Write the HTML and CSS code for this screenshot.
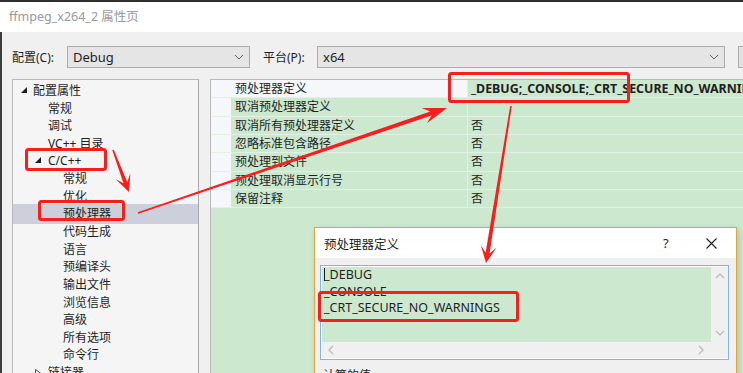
FILE: index.html
```html
<!DOCTYPE html>
<html lang="zh-CN">
<head>
    <meta charset="UTF-8">
    <title>ffmpeg_x264_2 属性页</title>
    <link rel="stylesheet" href="styles.css">
</head>
<body>
    <div class="screen">
        <div class="topline"></div>
        <div class="titlebar">ffmpeg_x264_2 属性页</div>

        <div class="window-body">
            <!-- Configuration / platform selectors -->
            <div class="config-row">
                <span class="label label-config">配置(C):</span>
                <div class="combo combo-config">
                    <span>Debug</span>
                    <svg class="chev" width="10" height="6" viewBox="0 0 10 6"><polyline points="1,1 5,5 9,1" fill="none" stroke="#606060" stroke-width="1"/></svg>
                </div>
                <span class="label label-platform">平台(P):</span>
                <div class="combo combo-platform">
                    <span>x64</span>
                    <svg class="chev" width="10" height="6" viewBox="0 0 10 6"><polyline points="1,1 5,5 9,1" fill="none" stroke="#606060" stroke-width="1"/></svg>
                </div>
                <div class="combo-btn"></div>
            </div>

            <div class="main">
                <!-- Property tree -->
                <div class="tree">
                    <div class="node lvl0"><svg class="tri" width="7" height="7" viewBox="0 0 7 7"><polygon points="6,0 6,6 0,6" fill="#1e1e1e"/></svg>配置属性</div>
                    <div class="node lvl1">常规</div>
                    <div class="node lvl1">调试</div>
                    <div class="node lvl1">VC++ 目录</div>
                    <div class="node lvl1 has-tri"><svg class="tri" width="7" height="7" viewBox="0 0 7 7"><polygon points="6,0 6,6 0,6" fill="#1e1e1e"/></svg>C/C++</div>
                    <div class="node lvl2">常规</div>
                    <div class="node lvl2">优化</div>
                    <div class="node lvl2 selected">预处理器</div>
                    <div class="node lvl2">代码生成</div>
                    <div class="node lvl2">语言</div>
                    <div class="node lvl2">预编译头</div>
                    <div class="node lvl2">输出文件</div>
                    <div class="node lvl2">浏览信息</div>
                    <div class="node lvl2">高级</div>
                    <div class="node lvl2">所有选项</div>
                    <div class="node lvl2">命令行</div>
                    <div class="node lvl1 has-tri"><svg class="tri" width="7" height="9" viewBox="0 0 7 9"><polygon points="0.5,0.5 6,4.5 0.5,8.5" fill="none" stroke="#555" stroke-width="1"/></svg>链接器</div>
                </div>

                <!-- Property grid -->
                <div class="grid">
                    <div class="row first">
                        <div class="gutter"></div>
                        <div class="name">预处理器定义</div>
                        <div class="value bold">_DEBUG;_CONSOLE;_CRT_SECURE_NO_WARNINGS;%(PreprocessorDefinitions)</div>
                    </div>
                    <div class="row">
                        <div class="gutter"></div>
                        <div class="name">取消预处理器定义</div>
                        <div class="value"></div>
                    </div>
                    <div class="row">
                        <div class="gutter"></div>
                        <div class="name">取消所有预处理器定义</div>
                        <div class="value">否</div>
                    </div>
                    <div class="row">
                        <div class="gutter"></div>
                        <div class="name">忽略标准包含路径</div>
                        <div class="value">否</div>
                    </div>
                    <div class="row">
                        <div class="gutter"></div>
                        <div class="name">预处理到文件</div>
                        <div class="value">否</div>
                    </div>
                    <div class="row">
                        <div class="gutter"></div>
                        <div class="name">预处理取消显示行号</div>
                        <div class="value">否</div>
                    </div>
                    <div class="row">
                        <div class="gutter"></div>
                        <div class="name">保留注释</div>
                        <div class="value">否</div>
                    </div>
                </div>
            </div>
        </div>

        <!-- Preprocessor definitions popup -->
        <div class="dialog">
            <div class="dialog-title">
                <span class="dialog-caption">预处理器定义</span>
                <span class="dialog-help">?</span>
                <svg class="dialog-close" width="11" height="11" viewBox="0 0 11 11"><path d="M0.5 0.5 L10.5 10.5 M10.5 0.5 L0.5 10.5" stroke="#1e1e1e" stroke-width="1.1"/></svg>
            </div>
            <div class="dialog-body">
                <div class="listbox">
                    <div class="list-area">
                        <div class="list-text">
                            <div class="line"><span class="caret"></span>_DEBUG</div>
                            <div class="line">_CONSOLE</div>
                            <div class="line">_CRT_SECURE_NO_WARNINGS</div>
                        </div>
                        <div class="vscroll">
                            <svg width="10" height="6" viewBox="0 0 10 6"><polyline points="1,5 5,1 9,5" fill="none" stroke="#b8b8b8" stroke-width="1.2"/></svg>
                            <svg width="10" height="6" viewBox="0 0 10 6"><polyline points="1,1 5,5 9,1" fill="none" stroke="#b8b8b8" stroke-width="1.2"/></svg>
                        </div>
                    </div>
                    <div class="hscroll">
                        <svg width="6" height="10" viewBox="0 0 6 10"><polyline points="5,1 1,5 5,9" fill="none" stroke="#b8b8b8" stroke-width="1.2"/></svg>
                        <svg width="6" height="10" viewBox="0 0 6 10"><polyline points="1,1 5,5 1,9" fill="none" stroke="#b8b8b8" stroke-width="1.2"/></svg>
                    </div>
                </div>
                <div class="evaluated">计算的值:</div>
            </div>
        </div>

        <!-- Red annotation marks drawn on top of the screenshot -->
        <svg class="marks" width="743" height="373" viewBox="0 0 743 373">
            <g fill="none" stroke="#f5201e" stroke-width="3">
                <rect x="449.5" y="73.5" width="179" height="28" rx="2"/>
                <rect x="26.5" y="149.5" width="79" height="20" rx="2"/>
                <rect x="39.5" y="201.5" width="84" height="18" rx="2"/>
                <rect x="319.5" y="292.5" width="198" height="28" rx="2"/>
            </g>
            <g fill="#f5201e">
                <polygon points="112.3,150.3 123.5,183.3 115.4,179 129,192 130.4,173.3 127.3,181.9 113.8,149.7"/>
                <polygon points="138.3,213.8 431.5,115.4 426.9,123.3 447,108 421.7,108.1 430.3,111.6 137.7,212.2"/>
                <polygon points="511.8,106.1 489.6,253.4 496.6,247.5 486,263 480.8,244.9 485.6,252.8 510.2,105.9"/>
            </g>
        </svg>
    </div>
</body>
</html>
```

FILE: styles.css
```css
/* Base */
html, body {
    margin: 0;
    padding: 0;
    overflow: hidden;
}

body {
    font-family: "Noto Sans", "Noto Sans CJK SC", sans-serif;
    font-size: 12px;
    color: #1e1e1e;
    background: #f0f0f0;
}

.screen {
    position: relative;
    width: 743px;
    height: 373px;
    overflow: hidden;
    background: #f0f0f0;
}

/* Window chrome */
.topline {
    height: 2px;
    background: #2f2f2f;
}

.titlebar {
    height: 30px;
    line-height: 29px;
    padding-left: 9px;
    background: #ffffff;
    color: #999999;
    font-size: 12.5px;
}

.window-body {
    border-left: 2px solid #3c3c3c;
    padding-left: 10px;
    height: 341px;
}

/* Config row */
.config-row {
    display: flex;
    align-items: center;
    padding-top: 14px;
    height: 22px;
}

.config-row > * {
    flex: none;
}

.label {
    white-space: nowrap;
}

.label-config {
    width: 55px;
}

.label-platform {
    margin-left: 13px;
    width: 54px;
}

.combo {
    box-sizing: border-box;
    height: 22px;
    display: flex;
    align-items: center;
    justify-content: space-between;
    padding: 0 5px 0 5px;
    background: #e5e5e5;
    border: 1px solid #adadad;
    font-size: 13px;
}

.combo-config {
    width: 183px;
}

.combo-platform {
    width: 408px;
}

.combo-btn {
    box-sizing: border-box;
    margin-left: 13px;
    width: 30px;
    height: 22px;
    background: #e1e1e1;
    border: 1px solid #adadad;
}

/* Main area */
.main {
    display: flex;
    margin-top: 11px;
    gap: 11px;
}

.tree {
    box-sizing: border-box;
    width: 187px;
    height: 300px;
    flex: none;
    padding-top: 2px;
    background: #f5f5f5;
    border: 1px solid #b9b9b9;
    border-right-color: #a8a8a8;
}

.node {
    position: relative;
    height: 17.6px;
    line-height: 17.6px;
    white-space: nowrap;
}

.lvl0 { padding-left: 20px; }
.lvl1 { padding-left: 35px; }
.lvl2 { padding-left: 50px; }

.node .tri {
    position: absolute;
    top: 5px;
    left: 8px;
}

.node.has-tri .tri {
    left: 22px;
}

.node.selected {
    background: #cdcfdb;
    height: 20px;
    line-height: 20px;
    margin-top: -1px;
    margin-bottom: -1px;
}

/* Property grid */
.grid {
    flex: 1;
    height: 300px;
    background: #cce8cf;
    border-top: 1px solid #b9b9b9;
    border-left: 1px solid #b9b9b9;
}

.row {
    display: flex;
    box-sizing: border-box;
    height: 18.33px;
    line-height: 17px;
    border-bottom: 1px solid #e3f1e5;
}

.gutter {
    width: 20px;
    flex: none;
    background: #f5f7fb;
}

.name {
    width: 232px;
    flex: none;
    padding-left: 4px;
    border-right: 1px solid #e3f1e5;
    white-space: nowrap;
}

.row.first .name {
    background: #f5f7fb;
}

.value {
    flex: 1;
    padding-left: 3px;
    white-space: nowrap;
    overflow: hidden;
}

.value.bold {
    font-weight: bold;
    font-size: 12.4px;
}

/* Popup dialog */
.dialog {
    position: absolute;
    left: 314px;
    top: 227px;
    width: 421px;
    height: 160px;
    border: 1px solid #e8a23a;
    background: #f0f0f0;
    box-shadow: 2px 2px 6px rgba(0, 0, 0, 0.15);
}

.dialog-title {
    display: flex;
    align-items: center;
    height: 30px;
    background: #ffffff;
    padding-left: 9px;
}

.dialog-caption {
    flex: 1;
    font-size: 12.5px;
}

.dialog-help {
    width: 20px;
    margin-right: 23px;
    font-size: 13px;
}

.dialog-close {
    margin-right: 19px;
}

.dialog-body {
    padding: 7px 6px 0 5px;
}

.listbox {
    box-sizing: border-box;
    width: 409px;
    height: 95px;
    border: 1px solid #7eb4ea;
    padding: 1px 0 0 1px;
    background: #ffffff;
}

.list-area {
    display: flex;
    height: 75px;
}

.list-text {
    flex: 1;
    background: #cce8cf;
    padding-left: 2px;
    font-size: 12.5px;
}

.line {
    height: 16.5px;
    line-height: 16.5px;
}

.caret {
    display: inline-block;
    width: 1px;
    height: 13px;
    background: #1e1e1e;
    vertical-align: -2px;
    margin-right: -1px;
}

.vscroll {
    width: 17px;
    background: #f0f0f0;
    display: flex;
    flex-direction: column;
    justify-content: space-between;
    align-items: center;
    padding: 6px 0 6px;
    box-sizing: border-box;
}

.hscroll {
    height: 16px;
    background: #f0f0f0;
    display: flex;
    justify-content: space-between;
    align-items: center;
    padding: 0 24px 0 6px;
}

.evaluated {
    margin-top: 6px;
    padding-left: 3px;
}

/* Annotation overlay */
.marks {
    position: absolute;
    left: 0;
    top: 0;
    pointer-events: none;
}
```
